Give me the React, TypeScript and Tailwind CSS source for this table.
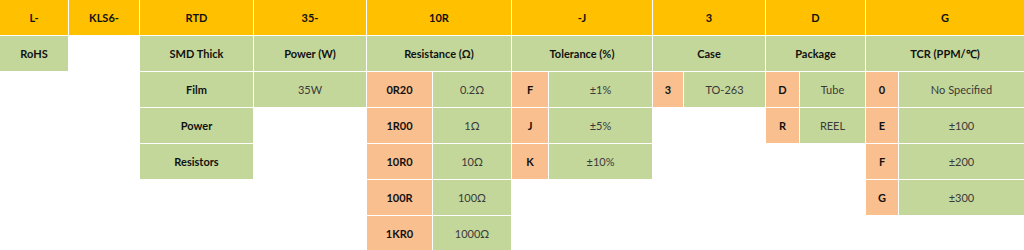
import React from 'react';

// ─── Cells ───────────────────────────────────────────────────────────────────

type Tone = 'head' | 'green' | 'code' | 'value';

interface Cell {
  text:  string;
  tone:  Tone;
  pos:   string; // grid placement classes, written out in full
}

const toneClass: Record<Tone, string> = {
  head:  'bg-[#ffc000] font-bold text-[#111]',
  green: 'bg-[#c4d79b] font-bold text-[#111]',
  code:  'bg-[#fabf8f] font-bold text-[#111]',
  value: 'bg-[#c4d79b] font-normal text-[#3a3a3a]',
};

const cells: Cell[] = [
  // header row
  { text: 'L-',    tone: 'head', pos: 'row-start-1 col-start-1' },
  { text: 'KLS6-', tone: 'head', pos: 'row-start-1 col-start-2' },
  { text: 'RTD',   tone: 'head', pos: 'row-start-1 col-start-3' },
  { text: '35-',   tone: 'head', pos: 'row-start-1 col-start-4' },
  { text: '10R',   tone: 'head', pos: 'row-start-1 col-start-5 col-span-2' },
  { text: '-J',    tone: 'head', pos: 'row-start-1 col-start-7 col-span-2' },
  { text: '3',     tone: 'head', pos: 'row-start-1 col-start-9 col-span-2' },
  { text: 'D',     tone: 'head', pos: 'row-start-1 col-start-11 col-span-2' },
  { text: 'G',     tone: 'head', pos: 'row-start-1 col-start-13 col-span-2' },

  // titles
  { text: 'RoHS',           tone: 'green', pos: 'row-start-2 col-start-1' },
  { text: 'SMD Thick',      tone: 'green', pos: 'row-start-2 col-start-3' },
  { text: 'Power (W)',      tone: 'green', pos: 'row-start-2 col-start-4' },
  { text: 'Resistance (Ω)', tone: 'green', pos: 'row-start-2 col-start-5 col-span-2' },
  { text: 'Tolerance (%)',  tone: 'green', pos: 'row-start-2 col-start-7 col-span-2' },
  { text: 'Case',           tone: 'green', pos: 'row-start-2 col-start-9 col-span-2' },
  { text: 'Package',        tone: 'green', pos: 'row-start-2 col-start-11 col-span-2' },
  { text: 'TCR (PPM/℃)',    tone: 'green', pos: 'row-start-2 col-start-13 col-span-2' },

  // RTD description
  { text: 'Film',      tone: 'green', pos: 'row-start-3 col-start-3' },
  { text: 'Power',     tone: 'green', pos: 'row-start-4 col-start-3' },
  { text: 'Resistors', tone: 'green', pos: 'row-start-5 col-start-3' },

  // power
  { text: '35W', tone: 'value', pos: 'row-start-3 col-start-4' },

  // resistance
  { text: '0R20', tone: 'code',  pos: 'row-start-3 col-start-5' },
  { text: '0.2Ω', tone: 'value', pos: 'row-start-3 col-start-6' },
  { text: '1R00', tone: 'code',  pos: 'row-start-4 col-start-5' },
  { text: '1Ω',   tone: 'value', pos: 'row-start-4 col-start-6' },
  { text: '10R0', tone: 'code',  pos: 'row-start-5 col-start-5' },
  { text: '10Ω',  tone: 'value', pos: 'row-start-5 col-start-6' },
  { text: '100R', tone: 'code',  pos: 'row-start-6 col-start-5' },
  { text: '100Ω', tone: 'value', pos: 'row-start-6 col-start-6' },
  { text: '1KR0', tone: 'code',  pos: 'row-start-7 col-start-5' },
  { text: '1000Ω', tone: 'value', pos: 'row-start-7 col-start-6' },

  // tolerance
  { text: 'F',    tone: 'code',  pos: 'row-start-3 col-start-7' },
  { text: '±1%',  tone: 'value', pos: 'row-start-3 col-start-8' },
  { text: 'J',    tone: 'code',  pos: 'row-start-4 col-start-7' },
  { text: '±5%',  tone: 'value', pos: 'row-start-4 col-start-8' },
  { text: 'K',    tone: 'code',  pos: 'row-start-5 col-start-7' },
  { text: '±10%', tone: 'value', pos: 'row-start-5 col-start-8' },

  // case
  { text: '3',      tone: 'code',  pos: 'row-start-3 col-start-9' },
  { text: 'TO-263', tone: 'value', pos: 'row-start-3 col-start-10' },

  // package
  { text: 'D',    tone: 'code',  pos: 'row-start-3 col-start-11' },
  { text: 'Tube', tone: 'value', pos: 'row-start-3 col-start-12' },
  { text: 'R',    tone: 'code',  pos: 'row-start-4 col-start-11' },
  { text: 'REEL', tone: 'value', pos: 'row-start-4 col-start-12' },

  // TCR
  { text: '0', tone: 'code',  pos: 'row-start-3 col-start-13' },
  { text: 'No Specified', tone: 'value', pos: 'row-start-3 col-start-14' },
  { text: 'E', tone: 'code',  pos: 'row-start-4 col-start-13' },
  { text: '±100', tone: 'value', pos: 'row-start-4 col-start-14' },
  { text: 'F', tone: 'code',  pos: 'row-start-5 col-start-13' },
  { text: '±200', tone: 'value', pos: 'row-start-5 col-start-14' },
  { text: 'G', tone: 'code',  pos: 'row-start-6 col-start-13' },
  { text: '±300', tone: 'value', pos: 'row-start-6 col-start-14' },
];

export default function App() {
  return (
    <div className="w-[1024px] h-[250px] overflow-hidden bg-white">
      <div
        className="grid gap-px text-[11px] leading-none font-['Lato',sans-serif]
          grid-cols-[68px_70px_113px_112px_65px_78px_36px_103px_30px_81px_33px_65px_32px_125px]
          grid-rows-[35px_35px_35px_35px_35px_35px_35px]"
      >
        {cells.map((c, i) => (
          <div
            key={i}
            className={`flex items-center justify-center ${toneClass[c.tone]} ${c.pos}`}
          >
            {c.text}
          </div>
        ))}
      </div>
    </div>
  );
}
